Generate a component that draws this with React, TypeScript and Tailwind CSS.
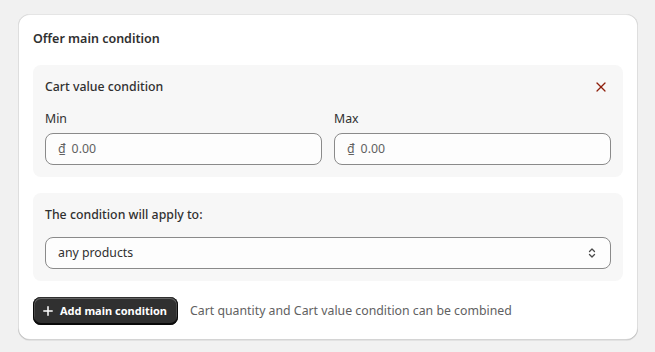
import { X } from 'lucide-react'

function ChevronUpDown() {
  return (
    <svg width="16" height="16" viewBox="0 0 16 16" fill="none" stroke="#4a4a4a" strokeWidth="1.3" strokeLinecap="round" strokeLinejoin="round">
      <path d="M5.5 6.5 8 4l2.5 2.5" />
      <path d="M5.5 9.5 8 12l2.5-2.5" />
    </svg>
  )
}

function MoneyInput() {
  return (
    <div className="w-full h-8 flex items-center gap-1.5 px-3 rounded-lg border border-[#8a8a8a] bg-[#fdfdfd] text-[12.3px] text-[#616161]">
      <span>₫</span>
      <span>0.00</span>
    </div>
  )
}

export default function App() {
  return (
    <div className="min-h-screen w-[655px] h-[352px] bg-[#f1f1f1] pt-[14px] pl-[18px] font-['Noto_Sans',sans-serif] text-[#303030]">
      <div className="w-[620px] rounded-xl bg-white p-[15px] shadow-[0_1px_0_0_rgba(26,26,26,0.07),inset_0_1px_0_0_rgba(204,204,204,0.5),inset_0_-1px_0_0_rgba(0,0,0,0.17),inset_1px_0_0_0_rgba(0,0,0,0.13),inset_-1px_0_0_0_rgba(0,0,0,0.13)]">
        <h2 className="text-[12.5px] leading-5 font-semibold">Offer main condition</h2>

        <div className="mt-4 rounded-lg bg-[#f7f7f7] p-3">
          <div className="flex items-center justify-between h-5">
            <span className="text-[12.3px] font-medium">Cart value condition</span>
            <X size={16} strokeWidth={1.8} className="text-[#8e1f0b] mr-0.5" />
          </div>
          <div className="mt-3 flex gap-3">
            <div className="flex-1 flex flex-col gap-1">
              <span className="text-[12.3px] leading-5">Min</span>
              <MoneyInput />
            </div>
            <div className="flex-1 flex flex-col gap-1">
              <span className="text-[12.3px] leading-5">Max</span>
              <MoneyInput />
            </div>
          </div>
        </div>

        <div className="mt-4 rounded-lg bg-[#f7f7f7] p-3">
          <div className="text-[12.3px] leading-5 font-medium">The condition will apply to:</div>
          <div className="mt-3 h-8 flex items-center justify-between pl-3 pr-[10px] rounded-lg border border-[#8a8a8a] bg-[#fdfdfd] text-[12.3px]">
            <span>any products</span>
            <ChevronUpDown />
          </div>
        </div>

        <div className="mt-4 flex items-center gap-3">
          <button className="h-7 flex items-center gap-[7px] pl-2.5 pr-[11px] rounded-lg bg-[#303030] text-white text-[11px] font-bold shadow-[inset_0_-1px_0_1px_rgba(0,0,0,0.8),inset_0_0_0_1px_#303030,inset_0_0.5px_0_1.5px_rgba(255,255,255,0.25)]">
            <svg width="10" height="10" viewBox="0 0 10 10" stroke="white" strokeWidth="1.5" strokeLinecap="round">
              <path d="M5 0.8v8.4M0.8 5h8.4" />
            </svg>
            Add main condition
          </button>
          <span className="text-[12.3px] text-[#616161]">Cart quantity and Cart value condition can be combined</span>
        </div>
      </div>
    </div>
  )
}
